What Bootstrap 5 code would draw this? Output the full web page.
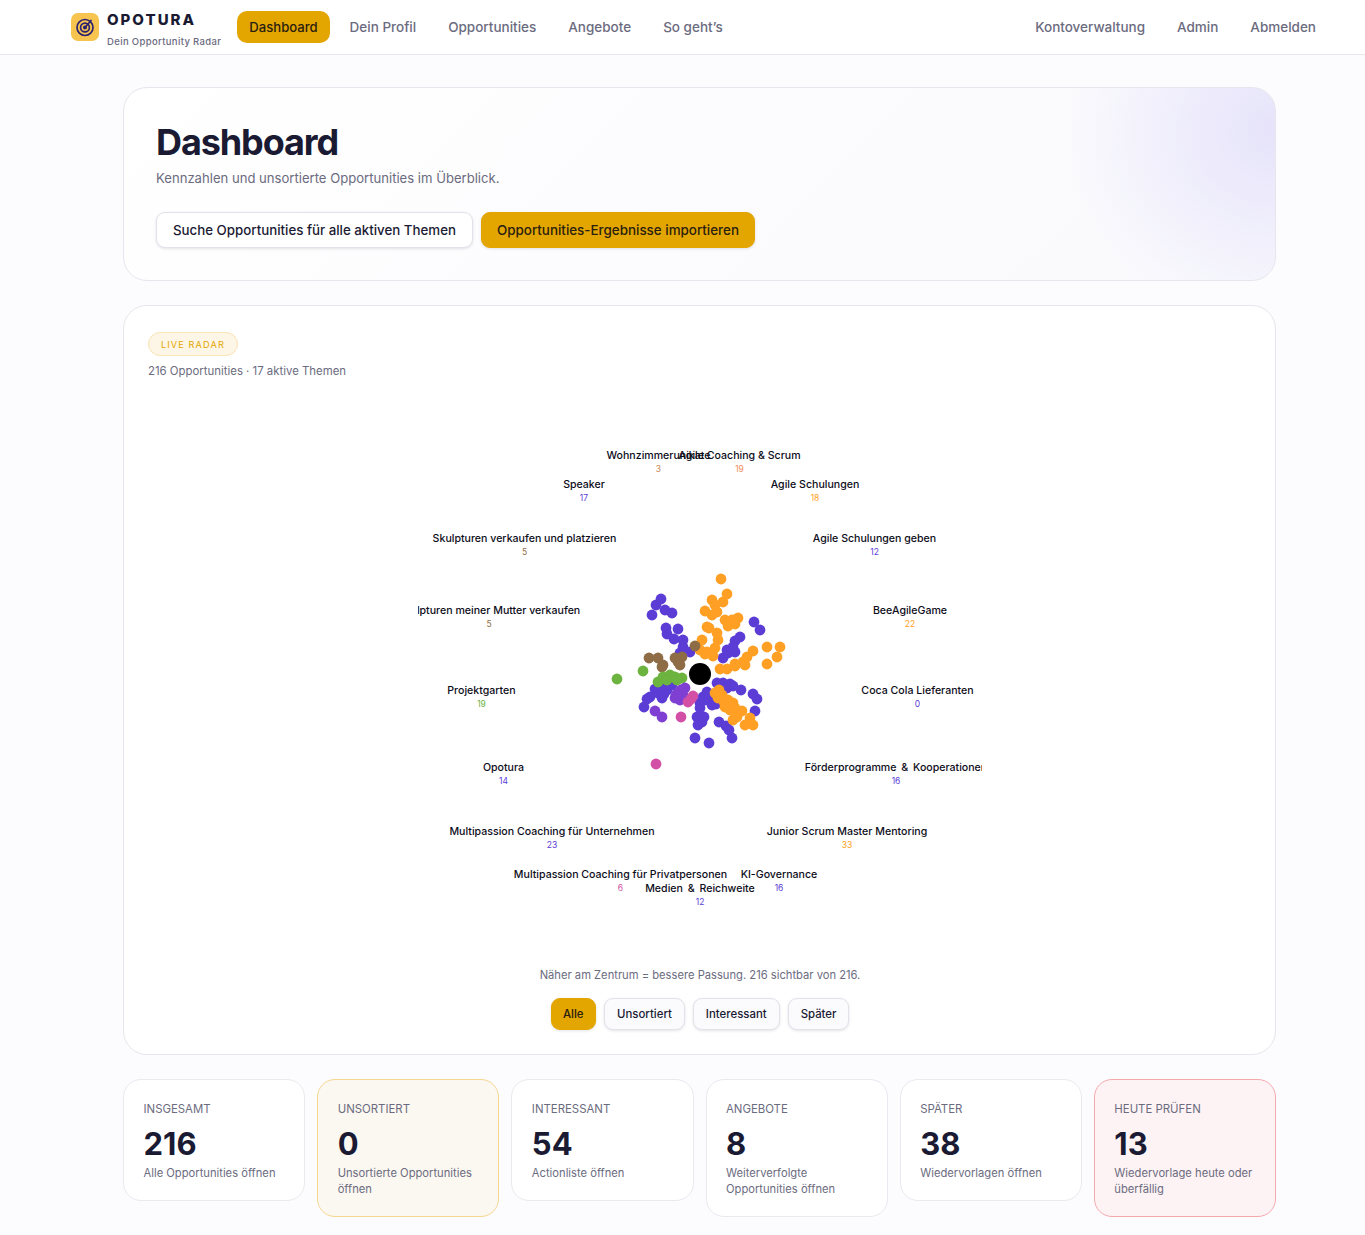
<!doctype html>
<html lang="de">
<head>
<meta charset="utf-8">
<title>Dashboard</title>
<link href="https://cdn.jsdelivr.net/npm/bootstrap@5.3.0/dist/css/bootstrap.min.css" rel="stylesheet">
<style>
body{background:#fcfcfe;font-family:Inter,"Liberation Sans",sans-serif;color:#1a1a33;font-size:14px}
.topbar{background:#fff;border-bottom:1px solid #e7e7ec;height:55px;padding:0 37px 0 71px}
.logo-box{width:28px;height:28px;border-radius:7px;background:#f6c44f;margin-right:8px}
.brand-name{font-weight:800;font-size:15px;letter-spacing:2px;line-height:18px;color:#1a1a33}
.brand-sub{font-size:9.5px;font-weight:500;line-height:12px;color:#6b6b80;margin-top:7px;letter-spacing:.35px}
.brand-text{padding-top:5px}
.brand-wrap{margin-right:16px}
.top-link{font-size:13.5px;font-weight:500;color:#6b6b80;padding:0 12px;line-height:32px;height:32px;border-radius:10px;text-decoration:none;display:block}
.top-link+.top-link{margin-left:8px}
.top-link.is-on{background:#e3a600;color:#2a2010;font-size:13.1px}
.page-wrap{width:1153px;margin:32px auto 0;margin-left:123px}
.hero-box{height:194px;border:1px solid #e6e6ee;border-radius:24px;padding:32px;background:radial-gradient(ellipse 210px 190px at 100% 22%,#e6e3fa 0,rgba(230,227,250,.55) 45%,rgba(230,227,250,0) 100%),linear-gradient(135deg,#fff 0,#f9f9fd 100%)}
.hero-title{font-size:36px;font-weight:700;line-height:44px;margin:0;color:#1a1a33;letter-spacing:-1.1px}
.hero-sub{font-size:13.1px;color:#6b6b80;line-height:20px;margin:4px 0 0}
.hero-actions{margin-top:24px}
.act-btn{font-size:13.3px;font-weight:500;height:36px;padding:0 16px;border-radius:9px;line-height:34px;color:#1a1a33;background:#fff;border:1px solid #e2e2ea;box-shadow:0 1px 3px rgba(30,30,60,.12)}
.act-btn.is-gold{background:#e3a600;border-color:#e3a600;color:#2a2010;font-size:13.4px;padding:0 15px}
.radar-box{margin-top:24px;height:750px;background:#fff;border:1px solid #e6e6ee;border-radius:24px;padding:26px 23px 0 24px}
.live-pill{display:inline-block;font-size:9.2px;letter-spacing:1.1px;color:#e3a600;background:#fdf6e6;border:1px solid #f8e4b4;border-radius:20px;height:24px;line-height:23px;padding:0 12px}
.radar-meta{font-size:11.4px;color:#6b6b80;line-height:16px;margin-top:7px}
.radar-svg{display:block;width:564px;height:564px;margin:13px auto 0;font-family:Inter,"Liberation Sans",sans-serif}
.lbl{font-size:10.6px;font-weight:500;fill:#0d0d1a;text-anchor:middle}
.lbl.amp{word-spacing:2px}
.cnt{font-size:8.5px;text-anchor:middle}
.radar-note{font-size:11.2px;color:#6b6b80;text-align:center;line-height:16px;margin-top:11px}
.filter-row{margin-top:15px}
.flt-btn{font-size:11.4px;font-weight:500;height:32px;line-height:30px;padding:0 12px;border-radius:9px;background:#fbfbfe;border:1px solid #e2e2ea;color:#1a1a33;box-shadow:0 1px 3px rgba(30,30,60,.12)}
.flt-btn.is-gold{background:#e3a600;border-color:#e3a600;color:#2a2010;padding:0 11.5px}
.stat-grid{display:grid;grid-template-columns:repeat(6,1fr);gap:12px;margin-top:24px;align-items:start}
.stat-box{display:block;text-decoration:none;background:#fff;border:1px solid #e9e9ef;border-radius:18px;padding:20.5px 20px 19px 19.5px;min-height:122px}
.stat-box.is-warn{background:#fbf8f1;border-color:#f5d88e}
.stat-box.is-alert{background:#fdf3f4;border-color:#f3a9ae}
.stat-cap{font-size:11.4px;color:#6b6b80;line-height:16px;text-transform:uppercase}
.stat-num{font-size:31px;font-weight:700;line-height:36px;color:#1a1a33;margin-top:9.5px}
.stat-txt{font-size:11.2px;color:#6b6b80;line-height:16px;margin-top:3px}
</style>
</head>
<body>
<nav class="topbar d-flex align-items-center">
  <div class="d-flex align-items-center brand-wrap">
    <span class="logo-box d-flex align-items-center justify-content-center">
      <svg width="20" height="20" viewBox="0 0 20 20" fill="none" stroke="#2d2170" stroke-width="1.7"><circle cx="10" cy="10.5" r="8"/><circle cx="10" cy="10.5" r="4.4"/><circle cx="10" cy="10.5" r="1.2" fill="#2d2170"/><path d="M10 10.5 16 3.5" stroke-linecap="round"/></svg>
    </span>
    <div class="brand-text">
      <div class="brand-name">OPOTURA</div>
      <div class="brand-sub">Dein Opportunity Radar</div>
    </div>
  </div>
  <a class="top-link is-on" href="#">Dashboard</a>
  <a class="top-link" href="#">Dein Profil</a>
  <a class="top-link" href="#">Opportunities</a>
  <a class="top-link" href="#">Angebote</a>
  <a class="top-link" href="#">So geht’s</a>
  <div class="ms-auto d-flex">
    <a class="top-link" href="#">Kontoverwaltung</a>
    <a class="top-link" href="#">Admin</a>
    <a class="top-link" href="#">Abmelden</a>
  </div>
</nav>

<main class="page-wrap">
  <section class="hero-box">
    <h1 class="hero-title">Dashboard</h1>
    <p class="hero-sub">Kennzahlen und unsortierte Opportunities im Überblick.</p>
    <div class="d-flex gap-2 hero-actions">
      <button class="btn act-btn" type="button">Suche Opportunities für alle aktiven Themen</button>
      <button class="btn act-btn is-gold" type="button">Opportunities-Ergebnisse importieren</button>
    </div>
  </section>

  <section class="radar-box">
    <span class="live-pill">LIVE RADAR</span>
    <div class="radar-meta">216 Opportunities · 17 aktive Themen</div>
    <svg class="radar-svg" id="radar" viewBox="418 392 564 564" role="img" aria-label="Opportunity Radar">
      <g id="dots"></g>
      <circle cx="700" cy="674" r="11" fill="#000"/>
      <g id="labels"></g>
    </svg>
    <div class="radar-note">Näher am Zentrum = bessere Passung. 216 sichtbar von 216.</div>
    <div class="filter-row d-flex justify-content-center gap-2">
      <button class="btn flt-btn is-gold" type="button">Alle</button>
      <button class="btn flt-btn" type="button">Unsortiert</button>
      <button class="btn flt-btn" type="button">Interessant</button>
      <button class="btn flt-btn" type="button">Später</button>
    </div>
  </section>

  <section class="stat-grid">
    <a class="stat-box" href="#"><div class="stat-cap">Insgesamt</div><div class="stat-num">216</div><div class="stat-txt">Alle Opportunities öffnen</div></a>
    <a class="stat-box is-warn" href="#"><div class="stat-cap">Unsortiert</div><div class="stat-num">0</div><div class="stat-txt">Unsortierte Opportunities öffnen</div></a>
    <a class="stat-box" href="#"><div class="stat-cap">Interessant</div><div class="stat-num">54</div><div class="stat-txt">Actionliste öffnen</div></a>
    <a class="stat-box" href="#"><div class="stat-cap">Angebote</div><div class="stat-num">8</div><div class="stat-txt">Weiterverfolgte Opportunities öffnen</div></a>
    <a class="stat-box" href="#"><div class="stat-cap">Später</div><div class="stat-num">38</div><div class="stat-txt">Wiedervorlagen öffnen</div></a>
    <a class="stat-box is-alert" href="#"><div class="stat-cap">Heute prüfen</div><div class="stat-num">13</div><div class="stat-txt">Wiedervorlage heute oder überfällig</div></a>
  </section>
</main>

<script src="https://cdn.jsdelivr.net/npm/bootstrap@5.3.0/dist/js/bootstrap.bundle.min.js"></script>
<script>
var P='#5b3dd6',O='#ff9f24',G='#6cb33f',B='#8e6c45',K='#d24fa5',V='#7f3fd2';
var sets=[
[P,'661,599 656,605 652,615 665,610 672,613 666,628 678,629 667,634 674,639 683,640 683,647 690,652 680,653 754,622 760,630 740,637 735,641 733,647 727,650 735,652 723,658 728,653 717,683 723,683 733,686 741,690 753,694 757,699 755,711 655,689 663,688 672,685 667,690 662,698 650,697 647,699 644,707 707,692 703,697 700,703 712,705 716,704 700,708 697,717 704,717 702,722 698,725 719,722 726,726 729,730 732,738 695,738 709,743 658,693 664,694 668,687 705,700 709,697 730,684 727,688'],
[O,'721,579 727,594 712,600 723,602 715,605 705,611 712,615 717,612 725,620 738,618 732,620 728,626 735,624 707,627 709,628 717,633 718,640 702,640 767,647 780,647 777,657 767,664 753,651 747,657 700,650 707,652 715,648 713,656 705,654 743,662 735,664 745,665 720,669 727,669 735,666 715,693 722,695 728,700 733,703 725,707 730,710 742,711 737,717 733,720 750,718 745,725 753,725 719,690 718,698 724,702 735,708 729,704'],
[B,'695,646 649,658 658,658 663,665 675,658 682,657 678,662 662,667 680,665'],
[G,'643,671 617,679 658,682 663,677 670,675 675,677 682,678 667,680 677,680'],
[V,'655,711 662,717 685,688 678,693 675,698 680,700 683,695 681,690 676,695'],
[K,'693,696 688,702 681,717 656,764 691,699']
];
var NS='http://www.w3.org/2000/svg',dots=document.getElementById('dots'),labels=document.getElementById('labels');
sets.forEach(function(s){s[1].split(' ').forEach(function(p){var a=p.split(','),c=document.createElementNS(NS,'circle');c.setAttribute('cx',a[0]);c.setAttribute('cy',a[1]);c.setAttribute('r','5.4');c.setAttribute('fill',s[0]);dots.appendChild(c);});});
[['Wohnzimmerunikate',658.5,459,'3','#c98a5a'],['Agile Coaching & Scrum',739.5,459,'19','#ec8f5c'],['Speaker',584,488,'17',P],['Agile Schulungen',815,488,'18',O],['Skulpturen verkaufen und platzieren',524.5,542,'5',B],['Agile Schulungen geben',874.5,542,'12',P],['Skulpturen meiner Mutter verkaufen',489,614,'5',B],['BeeAgileGame',910,614,'22',O],['Projektgarten',481.5,694,'19',G],['Coca Cola Lieferanten',917.5,694,'0',P],['Opotura',503.5,771,'14',P],['Förderprogramme & Kooperationen',896,771,'16',P],['Multipassion Coaching für Unternehmen',552,835,'23',P],['Junior Scrum Master Mentoring',847,835,'33',O],['Multipassion Coaching für Privatpersonen',620.5,878,'6',K],['KI-Governance',779,878,'16',P],['Medien & Reichweite',700,892,'12',P]].forEach(function(l){
var amp=l[0].indexOf('&')>-1&&l[0].indexOf('Agile')<0;
var t=document.createElementNS(NS,'text');t.setAttribute('class',amp?'lbl amp':'lbl');t.setAttribute('x',l[1]);t.setAttribute('y',l[2]);t.textContent=l[0];labels.appendChild(t);
var n=document.createElementNS(NS,'text');n.setAttribute('class','cnt');n.setAttribute('x',l[1]);n.setAttribute('y',l[2]+13);n.setAttribute('fill',l[4]);n.textContent=l[3];labels.appendChild(n);});
</script>
</body>
</html>
